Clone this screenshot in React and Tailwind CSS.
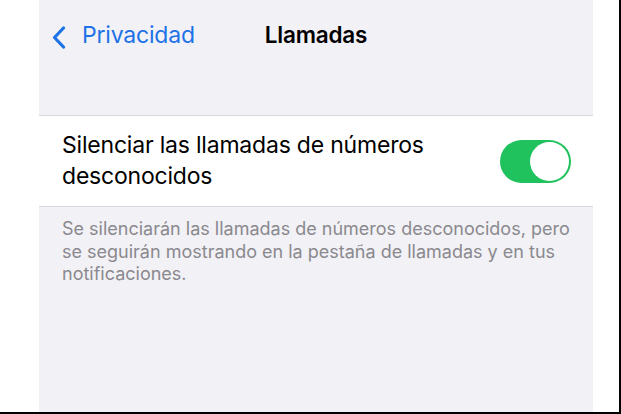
import React from 'react';

const Chevron = () => (
    <svg width="14" height="24" viewBox="0 0 14 24" fill="none">
        <path d="M11.5 2 L2.5 11.5 L11.5 21" stroke="#1d72e6" strokeWidth="3.2" strokeLinecap="round" strokeLinejoin="round" />
    </svg>
);

const Toggle = () => (
    <div className="w-[71px] h-[43px] rounded-full bg-[#1fc25c] relative">
        <div className="absolute right-[2px] top-[2px] w-[39px] h-[39px] rounded-full bg-white"></div>
    </div>
);

const App = () => {
    return (
        <div className="w-[621px] h-[414px] bg-white flex border-r-2 border-b-2 border-black overflow-hidden" style={{ fontFamily: 'Inter, "Noto Sans", sans-serif' }}>
            <div className="w-[39px] shrink-0"></div>
            <div className="w-[554px] shrink-0 bg-[#f2f1f6] flex flex-col">
                {/* nav bar */}
                <div className="h-[115px]">
                    <div className="h-[70px] flex items-center justify-center relative">
                        <div className="absolute left-[13px] top-0 h-full flex items-center gap-[16px]">
                            <span className="translate-y-[3px]"><Chevron /></span>
                            <span className="text-[23px] text-[#1d72e6] tracking-[-0.2px]">Privacidad</span>
                        </div>
                        <span className="text-[22.5px] font-semibold text-black tracking-[-0.2px]">Llamadas</span>
                    </div>
                </div>
                {/* cell */}
                <div className="bg-white border-t border-b border-[#d9d8dd] h-[92px] flex items-center pl-[23px] pr-[22px]">
                    <p className="flex-1 text-[23px] leading-[31px] text-black tracking-[-0.2px]">
                        Silenciar las llamadas de números<br />desconocidos
                    </p>
                    <Toggle />
                </div>
                {/* footer */}
                <p className="pl-[23px] pr-[8px] pt-[11px] text-[18px] leading-[22.5px] text-[#8a898e]">
                    Se silenciarán las llamadas de números desconocidos, pero se seguirán mostrando en la pestaña de llamadas y en tus notificaciones.
                </p>
            </div>
            <div className="flex-1"></div>
        </div>
    );
};

export default App;
